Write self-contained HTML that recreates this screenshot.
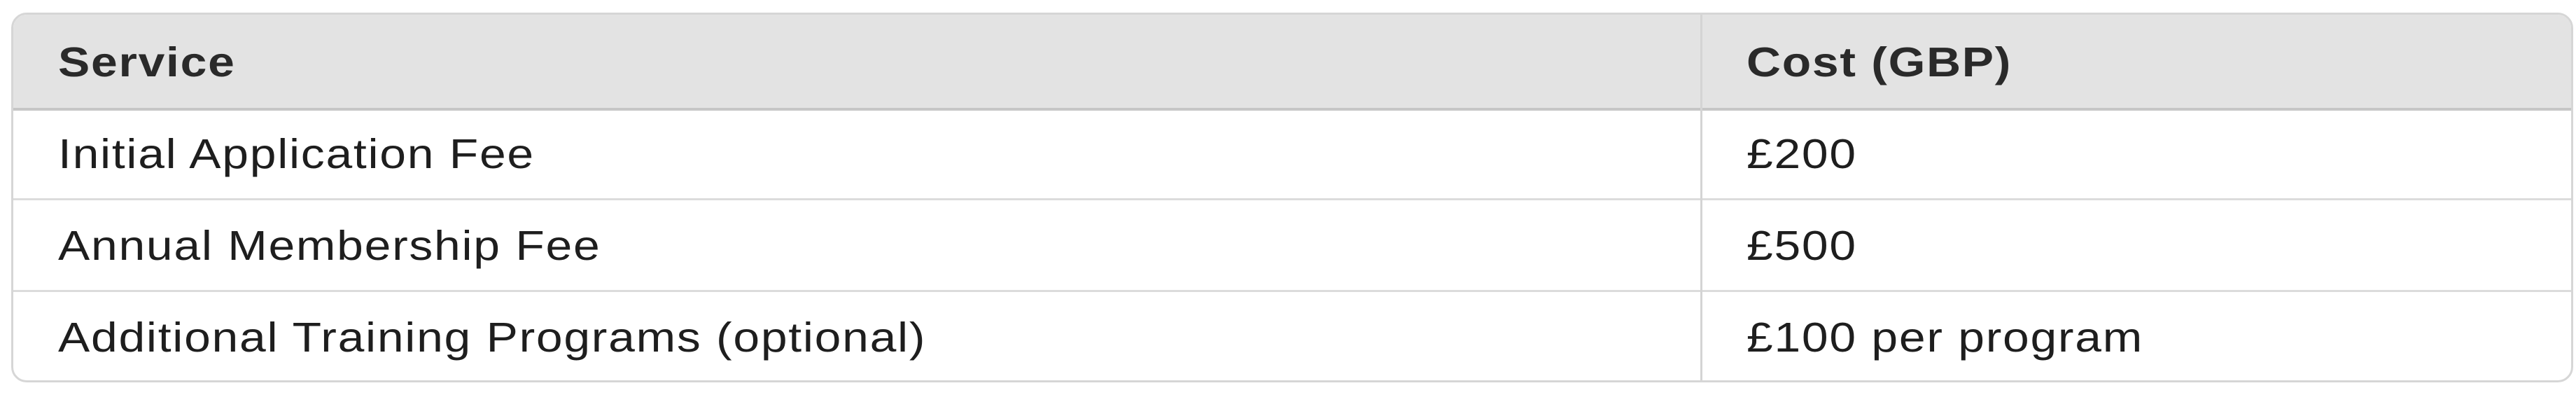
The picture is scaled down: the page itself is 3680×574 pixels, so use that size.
<!DOCTYPE html>
<html><head><style>
html,body{margin:0;padding:0;background:#fff;width:3680px;height:574px;overflow:hidden}
.t{position:absolute;left:16px;top:18px;width:3660px;height:528px;border:3px solid #d6d6d6;border-radius:22px;box-sizing:border-box;overflow:hidden}
.h{position:absolute;left:0;top:0;right:0;height:133px;background:#e3e3e3;border-bottom:4px solid #c6c6c6}
.hl{position:absolute;height:3px;left:0;right:0;background:#dcdcdc}
.v{position:absolute;left:2410px;top:0;bottom:0;width:3px;background:#d4d4d4}
.x{position:absolute;font-family:"Liberation Sans",sans-serif;font-size:59px;color:#1e1e1e;white-space:nowrap;line-height:1;letter-spacing:1.5px;transform:scaleX(1.15);transform-origin:0 0}
.b{font-weight:bold;color:#2a2a2a}
</style></head><body>
<div class="t">
<div class="h"></div>
<div class="hl" style="top:262px"></div>
<div class="hl" style="top:393px"></div>
<div class="v"></div>
<div class="x b" style="left:64px;top:39px">Service</div>
<div class="x b" style="left:2476px;top:39px">Cost (GBP)</div>
<div class="x" style="left:64px;top:170px">Initial Application Fee</div>
<div class="x" style="left:2476px;top:170px">£200</div>
<div class="x" style="left:64px;top:301px">Annual Membership Fee</div>
<div class="x" style="left:2476px;top:301px">£500</div>
<div class="x" style="left:64px;top:432px">Additional Training Programs (optional)</div>
<div class="x" style="left:2476px;top:432px">£100 per program</div>
</div>
</body></html>
